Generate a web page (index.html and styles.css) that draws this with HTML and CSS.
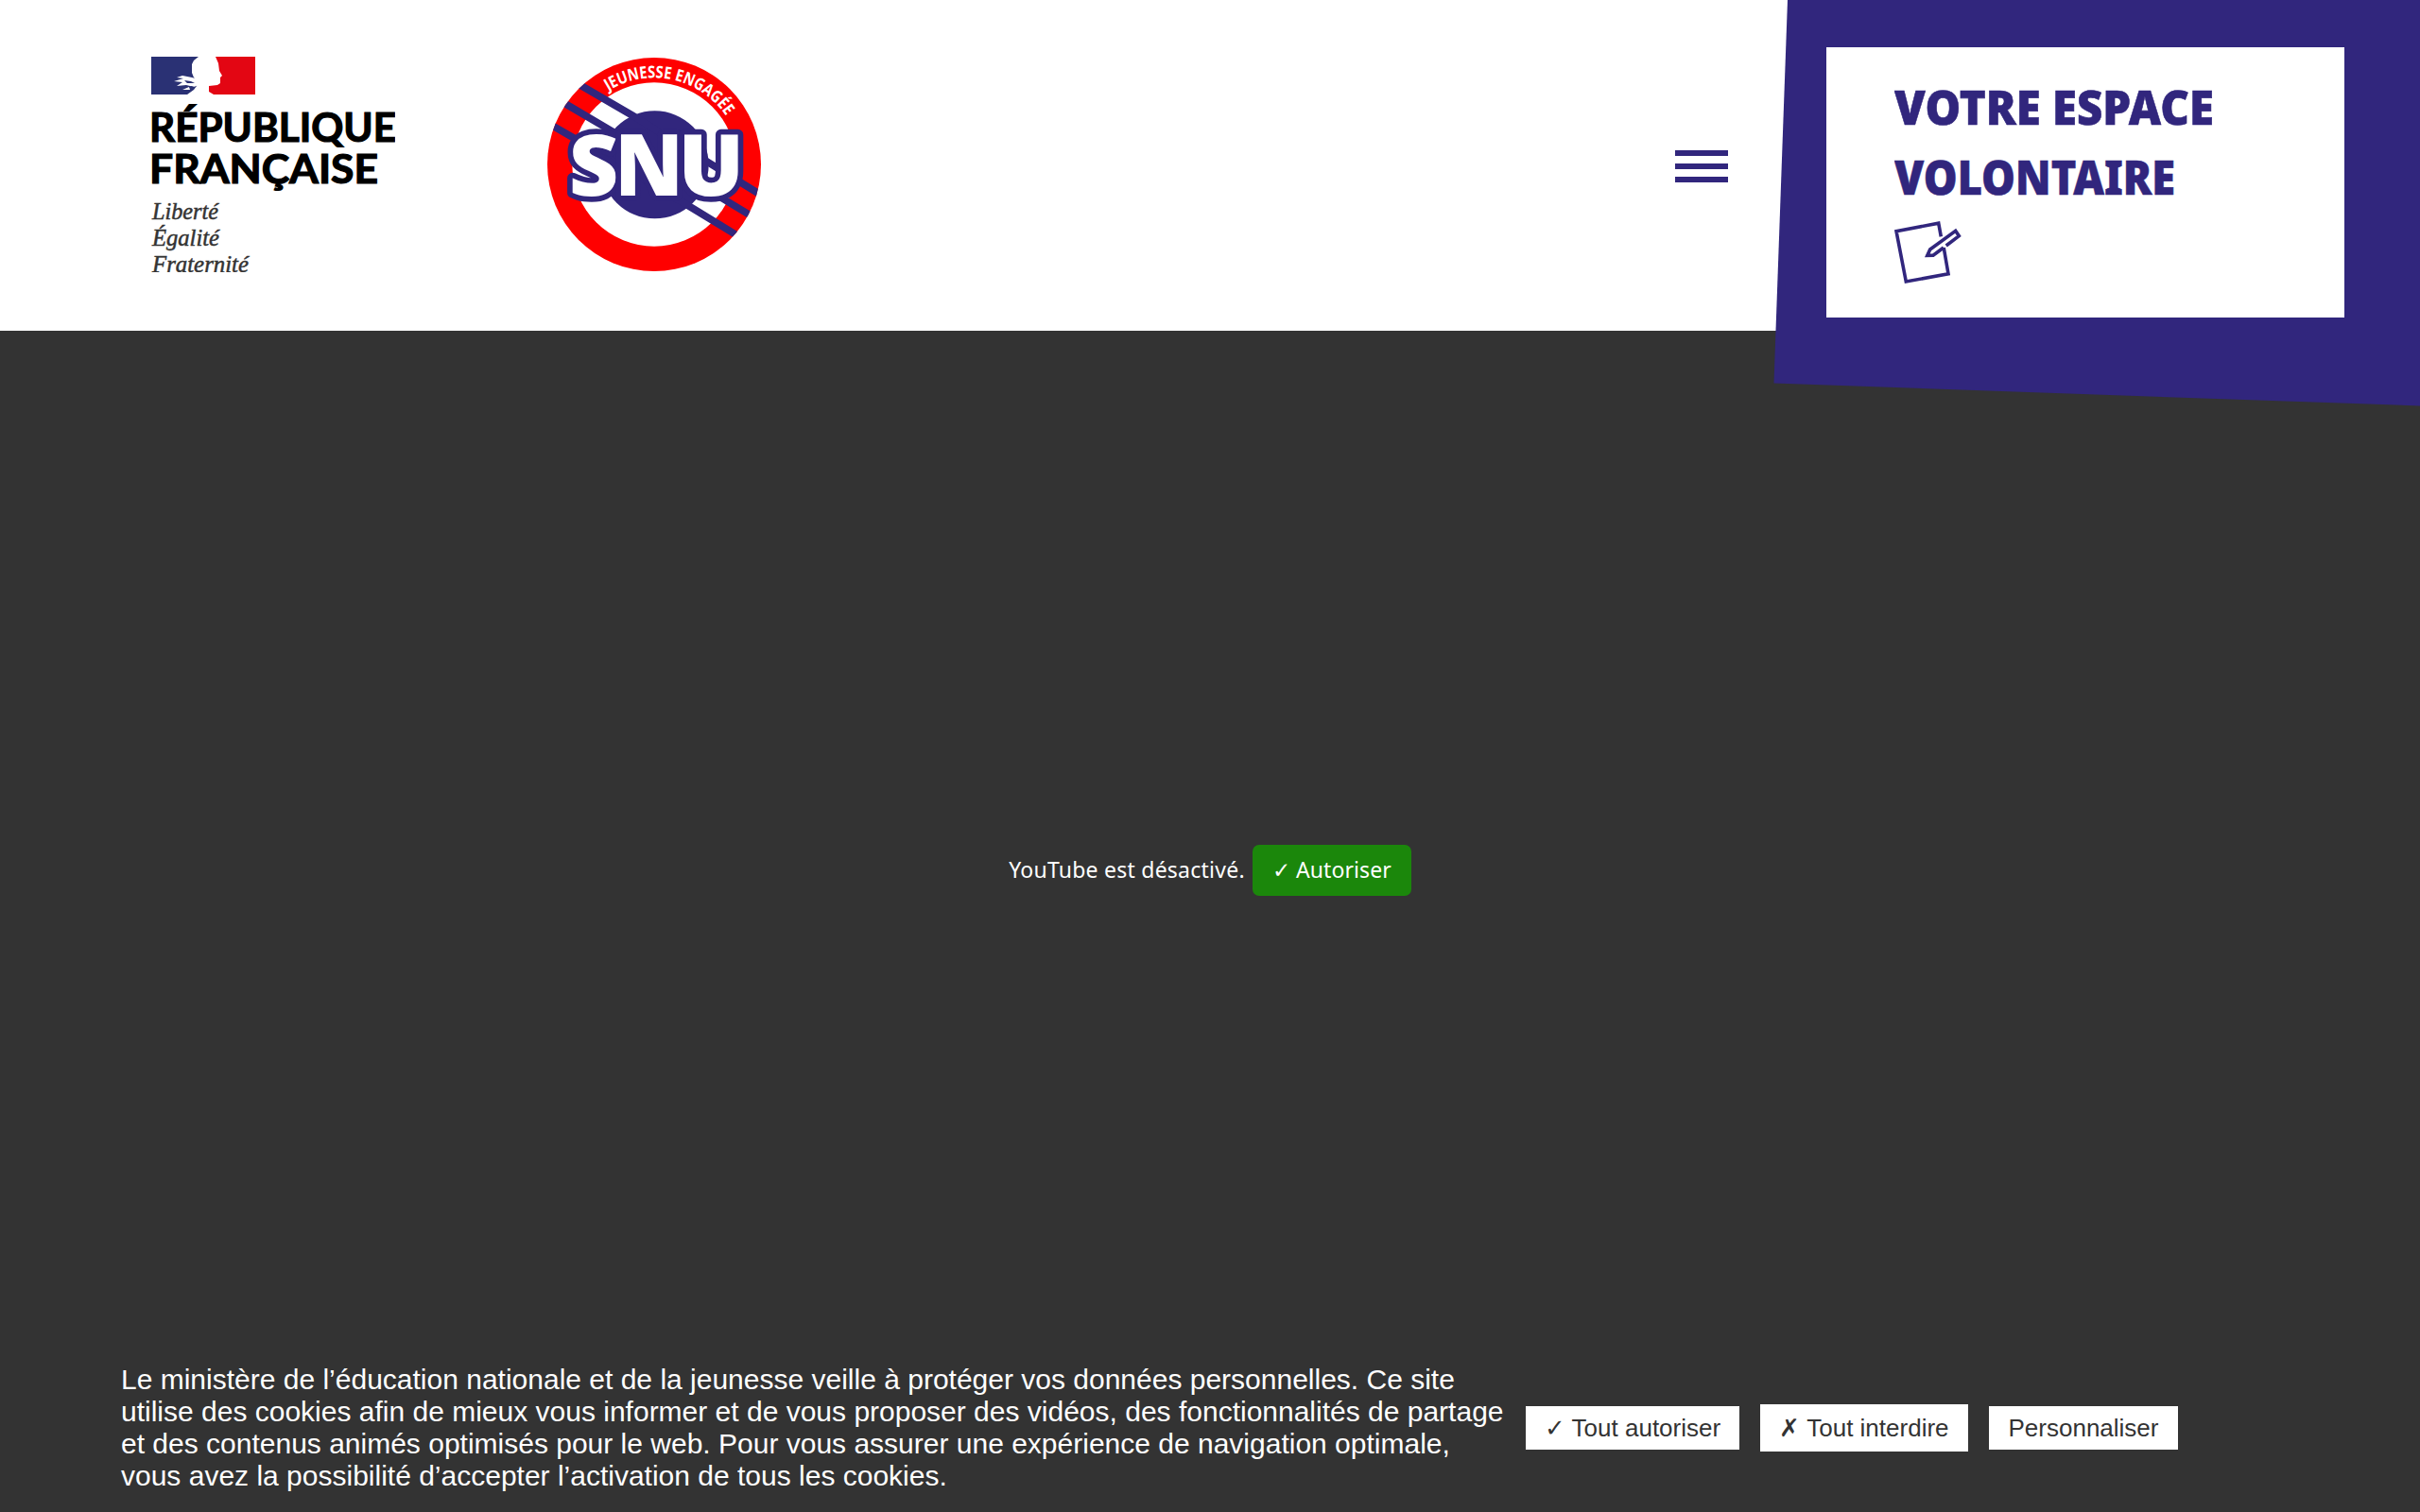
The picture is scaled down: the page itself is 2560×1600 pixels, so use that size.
FILE: index.html
```html
<!DOCTYPE html>
<html lang="fr">
<head>
<meta charset="utf-8">
<title>Service National Universel</title>
<link rel="stylesheet" href="styles.css">
</head>
<body>
<header class="header">
  <svg class="logo-rf" viewBox="0 0 258 228" role="img" aria-label="République Française">
    <path fill="#2a3174" d="M0 0H50L45 4L43 8V17L45 22L49 26L48 31L45 35L38 40H0Z"/>
    <path fill="#e30613" d="M68 0H110V40H66L61 37V31L70 30L73 28V22L75 20L72 15L71 7Z"/>
    <path fill="#fff" d="M50 24L43 22L33 20L27 22L34 23L24 26L33 27L27 31L37 30L45 32L50 30ZM40 32L33 35L41 35Z"/>
    <path fill="#2a3174" d="M35 25L42 26L46 28L38 28ZM42 31L46 32L40 33Z"/>
    <text class="rf-name" x="-2" y="90" textLength="261" lengthAdjust="spacingAndGlyphs">RÉPUBLIQUE</text>
    <text class="rf-name" x="-2" y="134" textLength="242" lengthAdjust="spacingAndGlyphs">FRANÇAISE</text>
    <text class="rf-motto" x="1" y="172" textLength="70" lengthAdjust="spacingAndGlyphs">Liberté</text>
    <text class="rf-motto" x="1" y="200" textLength="71" lengthAdjust="spacingAndGlyphs">Égalité</text>
    <text class="rf-motto" x="1" y="228" textLength="102" lengthAdjust="spacingAndGlyphs">Fraternité</text>
  </svg>
  <svg class="logo-snu" viewBox="56 60 684 684" role="img" aria-label="SNU Jeunesse engagée">
    <defs>
      <path id="arc" d="M252.3 168.8A275 275 0 0 1 627.3 250.2"/>
      <clipPath id="disc"><circle cx="398" cy="402" r="339"/></clipPath>
    </defs>
    <circle cx="398" cy="402" r="339" fill="#f00"/>
    <circle cx="398" cy="402" r="260" fill="#fff"/>
    <circle cx="400" cy="403" r="171" fill="#31267d"/>
    <path clip-path="url(#disc)" stroke="#31267d" stroke-width="23" fill="none" d="M160 148L330 247L740 501M105 203L270 300L710 568M70 276L150 322L510 535L670 633"/>
    <g class="snu-letters">
      <text x="127" y="500" textLength="158" lengthAdjust="spacingAndGlyphs">S</text>
      <text x="273" y="500" textLength="218" lengthAdjust="spacingAndGlyphs">N</text>
      <text x="474" y="500" textLength="210" lengthAdjust="spacingAndGlyphs">U</text>
    </g>
    <text class="snu-arc"><textPath href="#arc" textLength="422" lengthAdjust="spacingAndGlyphs">JEUNESSE ENGAGÉE</textPath></text>
  </svg>
  <button class="burger" aria-label="Menu"><span></span><span></span><span></span></button>
</header>
<aside class="espace">
  <a class="espace-card">
    <svg class="espace-title" viewBox="0 0 345 148">
      <text x="0" y="54" textLength="338" lengthAdjust="spacingAndGlyphs">VOTRE ESPACE</text>
      <text x="0" y="128" textLength="297" lengthAdjust="spacingAndGlyphs">VOLONTAIRE</text>
    </svg>
    <svg class="espace-icon" viewBox="0 0 72 68">
      <path d="M49.3 16.3L46.7 2.2L2 10.7L12.3 64L57 55.7L52.2 28M54.7 26L68.3 15.7L64.7 10.3L37.7 30L34.8 36.4L41 36.2L52 28"/>
    </svg>
  </a>
</aside>
<main class="video">
  <p class="video-text">YouTube est désactivé.</p>
  <button class="video-allow">✓ Autoriser</button>
</main>
<section class="cookies">
  <p class="cookies-text">Le ministère de l’éducation nationale et de la jeunesse veille à protéger vos données personnelles. Ce site<br>utilise des cookies afin de mieux vous informer et de vous proposer des vidéos, des fonctionnalités de partage<br>et des contenus animés optimisés pour le web. Pour vous assurer une expérience de navigation optimale,<br>vous avez la possibilité d’accepter l’activation de tous les cookies.</p>
  <div class="cookies-actions">
    <button class="choice choice-allow">✓ Tout autoriser</button>
    <button class="choice choice-deny">✗ Tout interdire</button>
    <button class="choice choice-custom">Personnaliser</button>
  </div>
</section>
</body>
</html>
```
FILE: styles.css
```css
* { box-sizing: border-box; }
body {
  margin: 0;
  height: 1600px;
  display: flex;
  flex-direction: column;
  overflow: hidden;
  background: #333;
  color: #fff;
  font-family: "Noto Sans", sans-serif;
}
button { border: 0; margin: 0; padding: 0; }
.header {
  height: 350px;
  flex: none;
  display: flex;
  align-items: flex-start;
  padding: 60px 732px 0 160px;
  background: #fff;
}
.logo-rf { width: 258px; height: 228px; overflow: hidden; }
.rf-name { font: 700 41.5px Lato, sans-serif; fill: #000; stroke: #000; stroke-width: 1.2; }
.rf-motto { font: italic 25px "Liberation Serif", serif; fill: #333; stroke: #333; stroke-width: .5; }
.logo-snu { width: 228px; height: 228px; margin-left: 160px; }
.snu-letters {
  font: 800 273px "Open Sans", sans-serif;
  fill: #fff;
  stroke: #31267d;
  stroke-width: 34px;
  stroke-linejoin: round;
  paint-order: stroke;
}
.snu-arc { font: 700 53px "Open Sans", sans-serif; fill: #fff; }
.burger {
  width: 56px;
  margin: 99px 0 0 auto;
  display: flex;
  flex-direction: column;
  gap: 8px;
  background: none;
}
.burger span { height: 6px; width: 100%; background: #31267d; }
.espace {
  position: absolute;
  top: 0;
  right: 0;
  width: 684px;
  height: 430px;
  padding: 50px 80px 0 56px;
  background: #31267d;
  clip-path: polygon(15px 0, 100% 0, 100% 429.5px, .5px 405.5px);
}
.espace-card {
  display: flex;
  flex-direction: column;
  height: 286px;
  padding: 28px 72px 0;
  background: #fff;
}
.espace-title { width: 345px; height: 148px; }
.espace-title text {
  font: 900 49px "Noto Sans", sans-serif;
  fill: #31267d;
  stroke: #31267d;
  stroke-width: .6;
}
.espace-icon { width: 72px; height: 68px; margin-top: 8px; }
.espace-icon path { fill: none; stroke: #31267d; stroke-width: 3.6; stroke-linejoin: miter; }
.video {
  height: 1142px;
  margin-bottom: -60px;
  flex: none;
  display: flex;
  align-items: center;
  justify-content: center;
  gap: 8px;
}
.video-text { margin: 0; padding-bottom: 3px; font-size: 23px; letter-spacing: .24px; }
.video-allow {
  width: 168px;
  height: 54px;
  padding-bottom: 3px;
  border-radius: 7px;
  background: #1b870b;
  color: #fff;
  font: 23px "Noto Sans", sans-serif;
  letter-spacing: .1px;
}
.cookies {
  height: 168px;
  flex: none;
  display: flex;
  align-items: flex-start;
  padding: 11px 0 0 128px;
  font-family: "Liberation Sans", sans-serif;
}
.cookies-text { width: 1486px; margin: 0; font-size: 30px; line-height: 34px; white-space: nowrap; }
.cookies-actions { display: flex; align-items: center; gap: 22px; height: 50px; margin-top: 43px; }
.choice { height: 46px; background: #fff; color: #333; font: 26px "Liberation Sans", sans-serif; white-space: nowrap; }
.choice-allow { width: 226px; }
.choice-deny { width: 220px; height: 50px; }
.choice-custom { width: 200px; }
```
